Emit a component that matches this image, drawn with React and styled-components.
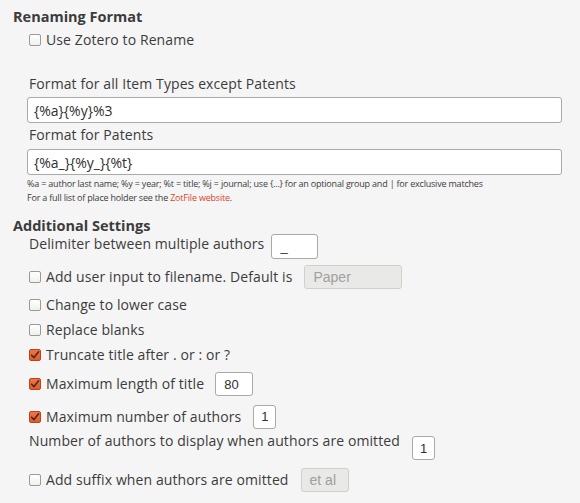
import React from "react";
import styled, { createGlobalStyle } from "styled-components";

const Global = createGlobalStyle`
  html, body {
    margin: 0;
    padding: 0;
    background: #f5f5f5;
  }
  body {
    font-family: "Open Sans", "DejaVu Sans", sans-serif;
    font-size: 14px;
    letter-spacing: 0.1px;
    color: #3c3c3c;
  }
`;

const Page = styled.div`
  width: 580px;
  height: 503px;
  box-sizing: border-box;
  padding: 8px 0 0 13px;
  overflow: hidden;
`;

const Heading = styled.div`
  font-weight: 700;
  font-size: 14.5px;
  letter-spacing: 0;
  line-height: 18px;
  height: 18px;
  margin-top: ${(p) => p.$top || 0}px;
`;

const Group = styled.div`
  padding-left: 16px;
  display: flex;
  flex-direction: column;
`;

const Row = styled.div`
  display: flex;
  align-items: ${(p) => (p.$top ? "flex-start" : "center")};
  height: ${(p) => p.$h || 25}px;
  margin-top: ${(p) => p.$mt || 0}px;
  gap: ${(p) => p.$gap ?? 11}px;
  white-space: nowrap;
`;

const Label = styled.span`
  line-height: 18px;
`;

const CheckWrap = styled.label`
  display: flex;
  align-items: center;
  gap: 5px;
`;

const Box = styled.span`
  width: 12px;
  height: 12px;
  box-sizing: border-box;
  border-radius: 2px;
  border: 1px solid ${(p) => (p.$on ? "#b5461f" : "#9a9a96")};
  background: ${(p) =>
    p.$on ? "linear-gradient(#ef7448, #e25a2a)" : "linear-gradient(#ffffff, #f0f0ee)"};
  display: flex;
  align-items: center;
  justify-content: center;
  flex: none;
`;

const WideInput = styled.div`
  height: 26px;
  width: 535px;
  margin-left: -2px;
  box-sizing: border-box;
  border: 1px solid #a9a9a5;
  border-radius: 3px;
  background: #fff;
  display: flex;
  align-items: center;
  padding-left: 6px;
  font-size: 14px;
  letter-spacing: 0;
  color: #2f2f2f;
`;

const SmallInput = styled.div`
  height: ${(p) => p.$h || 24}px;
  width: ${(p) => p.$w}px;
  box-sizing: border-box;
  border: 1px solid ${(p) => (p.$off ? "#cfcfcc" : "#a9a9a5")};
  border-radius: 3px;
  background: ${(p) => (p.$off ? "#e9e9e7" : "#fff")};
  color: ${(p) => (p.$off ? "#a0a09e" : "#2f2f2f")};
  display: flex;
  align-items: center;
  padding-left: ${(p) => p.$pad ?? 8}px;
  font-family: "Liberation Sans", Arial, sans-serif;
  font-size: ${(p) => (p.$off ? 14 : 13)}px;
  letter-spacing: 0;
  flex: none;
  margin-top: ${(p) => p.$mt || 0}px;
`;

const Note = styled.div`
  font-size: 9px;
  line-height: 14px;
  margin-left: -2px;
  margin-top: ${(p) => p.$mt || 0}px;
  letter-spacing: -0.2px;
  white-space: nowrap;
`;

const Link = styled.a`
  color: #d9452b;
  text-decoration: none;
`;

function Check({ on, children }) {
  return (
    <CheckWrap>
      <Box $on={on}>
        {on && (
          <svg width="10" height="10" viewBox="0 0 10 10">
            <path
              d="M1.6 5.2 L4 7.6 L8.6 1.8"
              fill="none"
              stroke="#4a2a20"
              strokeWidth="1.6"
              strokeLinecap="round"
              strokeLinejoin="round"
            />
          </svg>
        )}
      </Box>
      <Label>{children}</Label>
    </CheckWrap>
  );
}

export default function App() {
  return (
    <>
      <Global />
      <Page>
        <Heading>Renaming Format</Heading>
        <Group>
          <Row $h={28}>
            <Check>Use Zotero to Rename</Check>
          </Row>
          <Row $h={24} $mt={18}>
            <Label>Format for all Item Types except Patents</Label>
          </Row>
          <Row $h={28}>
            <WideInput>{"{%a}{%y}%3"}</WideInput>
          </Row>
          <Row $h={22}>
            <Label>Format for Patents</Label>
          </Row>
          <Row $h={28} $mt={2}>
            <WideInput>{"{%a_}{%y_}{%t}"}</WideInput>
          </Row>
          <Note $mt={1}>
            %a = author last name; %y = year; %t = title; %j = journal; use {"{...}"} for an
            optional group and | for exclusive matches
          </Note>
          <Note>
            For a full list of place holder see the <Link>ZotFile website</Link>.
          </Note>
        </Group>
        <Heading $top={12}>Additional Settings</Heading>
        <Group>
          <Row $h={26} $top $gap={7}>
            <Label>Delimiter between multiple authors</Label>
            <SmallInput $w={47} $h={25} $mt={-1}>_</SmallInput>
          </Row>
          <Row $h={32} $gap={12}>
            <Check>Add user input to filename. Default is</Check>
            <SmallInput $w={98} $off>Paper</SmallInput>
          </Row>
          <Row $h={24}>
            <Check>Change to lower case</Check>
          </Row>
          <Row $h={26}>
            <Check>Replace blanks</Check>
          </Row>
          <Row $h={24}>
            <Check on>Truncate title after . or : or ?</Check>
          </Row>
          <Row $h={34}>
            <Check on>Maximum length of title</Check>
            <SmallInput $w={38}>80</SmallInput>
          </Row>
          <Row $h={31} $gap={12}>
            <Check on>Maximum number of authors</Check>
            <SmallInput $w={23} $pad={7}>1</SmallInput>
          </Row>
          <Row $h={36} $top $gap={12}>
            <Label>Number of authors to display when authors are omitted</Label>
            <SmallInput $w={23} $pad={7} $mt={4}>1</SmallInput>
          </Row>
          <Row $h={24} $gap={12}>
            <Check>Add suffix when authors are omitted</Check>
            <SmallInput $w={48} $off>et al</SmallInput>
          </Row>
        </Group>
      </Page>
    </>
  );
}
